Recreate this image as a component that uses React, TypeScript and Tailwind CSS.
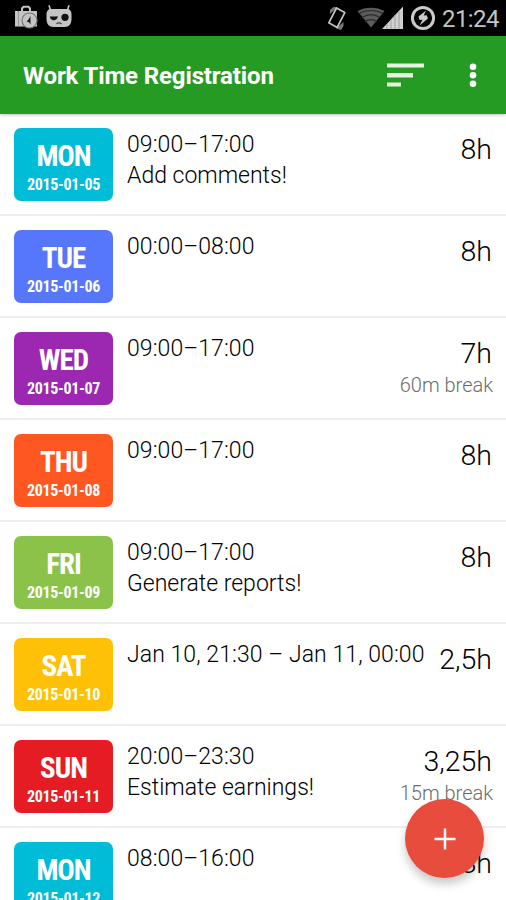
import clsx from "clsx";

type Entry = {
  day: string;
  date: string;
  color: string;
  time: string;
  note?: string;
  hours: string;
  pause?: string;
};

const entries: Entry[] = [
  { day: "MON", date: "2015-01-05", color: "bg-[#00bcd6]", time: "09:00–17:00", note: "Add comments!", hours: "8h" },
  { day: "TUE", date: "2015-01-06", color: "bg-[#5677fc]", time: "00:00–08:00", hours: "8h" },
  { day: "WED", date: "2015-01-07", color: "bg-[#9c27b0]", time: "09:00–17:00", hours: "7h", pause: "60m break" },
  { day: "THU", date: "2015-01-08", color: "bg-[#ff5722]", time: "09:00–17:00", hours: "8h" },
  { day: "FRI", date: "2015-01-09", color: "bg-[#8bc34a]", time: "09:00–17:00", note: "Generate reports!", hours: "8h" },
  { day: "SAT", date: "2015-01-10", color: "bg-[#ffc107]", time: "Jan 10, 21:30 – Jan 11, 00:00", hours: "2,5h" },
  { day: "SUN", date: "2015-01-11", color: "bg-[#e51c23]", time: "20:00–23:30", note: "Estimate earnings!", hours: "3,25h", pause: "15m break" },
  { day: "MON", date: "2015-01-12", color: "bg-[#00bcd6]", time: "08:00–16:00", hours: "8h" },
];

const StatusBar = () => (
  <div className="flex h-9 shrink-0 items-center justify-between bg-black pr-[7px] pl-[14px]">
    <div className="-mt-[2px] flex items-center gap-[8px]">
      {/* briefcase with clock */}
      <svg width="24" height="24" viewBox="0 0 24 24" fill="none">
        <path d="M1 6h22v15.500H1z" fill="#c4c4c4" />
        <path d="M8 6V3.500L9.500 1.800h5L16 3.500V6" stroke="#c4c4c4" strokeWidth="2" />
        <path d="M4.500 6v15.500" stroke="#999" strokeWidth="1" />
        <circle cx="15.500" cy="15.500" r="7.500" fill="#c4c4c4" stroke="#777" strokeWidth="1.200" />
        <path d="M16.500 11v8.500l-1.500-2.200-2.500-.8 2-2z" fill="#1a1a1a" />
      </svg>
      {/* cyanogen head */}
      <svg width="26" height="24" viewBox="0 0 26 24" fill="none">
        <path d="M3 .3l1.500 5M23 .3l-1.500 5" stroke="#c4c4c4" strokeWidth="1.600" />
        <path d="M5.500 4h15c3.500 0 5 2 5 5.500V14c0 5-2.500 8-7 8h-11c-4.500 0-7-3-7-8V9.500C.5 6 2 4 5.500 4z" fill="#c4c4c4" />
        <path d="M3.800 11.500c2.500.2 5 .2 8-.3-.3 2.800-2 4-4 4s-3.500-1.200-4-3.700z" fill="#111" />
        <circle cx="19" cy="12.300" r="3.600" fill="#111" />
        <path d="M10.500 18.700c1.500-1 3.500-1 5 .2" stroke="#444" strokeWidth="1.400" />
      </svg>
    </div>

    <div className="flex items-center">
      <svg width="22" height="26" viewBox="0 0 22 26" fill="none" className="mr-[9px]">
        <path d="M4 9V5l3.500-3h4zM17.500 17v4L15 25l-5-1.500z" fill="#777" />
        <path d="M10.500 3l8.300 4.600-7.600 14.800-8.400-4.600z" fill="#000" stroke="#c4c4c4" strokeWidth="1.700" strokeLinejoin="round" />
      </svg>
      <svg width="28" height="24" viewBox="0 0 28 24">
        <path d="M14 21.500L.5 5C8 .5 20 .5 27.500 5z" fill="#5c5c5c" />
        <path d="M2 7.500c7-4 17-4 24 0M5 11.500c5.500-3.500 12.500-3.500 18 0M8 15.500c3.500-2.500 8.500-2.500 12 0" fill="none" stroke="#2b2b2b" strokeWidth="1.200" />
      </svg>
      <svg width="22" height="24" viewBox="0 0 22 24" className="-ml-[3px]">
        <path d="M0 23L21 .5V23z" fill="#cfcfcf" />
        <path d="M5 18v5M9 14v9M13 9v14M17 5v18" stroke="#a6a6a6" strokeWidth="1.200" />
      </svg>
      <svg width="26" height="26" viewBox="0 0 26 26" fill="none" className="-mt-px ml-[6px]">
        <circle cx="13" cy="13" r="10.600" stroke="#cacaca" strokeWidth="3" />
        <path d="M16 5.500l-7.500 6 1 3.500 3-.3L9.500 20.500l8.500-7-1.300-3.200-3 .2z" fill="#cacaca" />
      </svg>
      <span className="ml-[6px] w-[57px] pt-[2px] text-[24px] leading-[34px] tracking-[-0.6px] text-[#c4c4c4]">21:24</span>
    </div>
  </div>
);

const Toolbar = () => (
  <header className="relative z-10 flex h-[78px] shrink-0 items-center justify-between bg-[#259b24] pr-[29px] pl-[23px] text-white shadow-[0_1px_3px_rgba(0,0,0,0.25)]">
    <h1 className="pt-[2px] text-[24px] leading-8 font-bold tracking-[-0.13px] whitespace-nowrap">
      Work Time Registration
    </h1>
    <div className="flex items-center gap-[45px]">
      <svg width="37" height="24" viewBox="0 0 37 24" fill="#e4f6e0">
        <path d="M0 .5h37v4H0zM0 10h26v4.500H0zM0 19.500h14v4H0z" />
      </svg>
      <svg width="8" height="24" viewBox="0 0 8 24" fill="#fff">
        <circle cx="4" cy="3.800" r="3.300" />
        <circle cx="4" cy="12.200" r="3.300" />
        <circle cx="4" cy="20.700" r="3.300" />
      </svg>
    </div>
  </header>
);

const Row = ({ entry }: { entry: Entry }) => (
  <li className="flex h-[102px] shrink-0 items-start border-b-2 border-[#efefef] pt-[14px] pr-[14px] pl-[14px]">
    <div
      className={clsx(
        "flex h-[73px] w-[99px] shrink-0 flex-col items-center rounded-[7px] pt-[11px] font-['Roboto_Condensed','Roboto'] font-bold text-white",
        entry.color,
      )}
    >
      <span className="text-[29px] leading-[34px] tracking-[-1px]">{entry.day}</span>
      <span className="pt-px text-[16px] leading-[22px] tracking-[-0.3px]">{entry.date}</span>
    </div>
    <div className="ml-[14px] flex flex-1 flex-col pt-px whitespace-nowrap text-[23px] leading-[31px] font-light text-black">
      <span className="tracking-[0.07px]">{entry.time}</span>
      {entry.note && <span>{entry.note}</span>}
    </div>
    <div className="flex flex-col items-end whitespace-nowrap">
      <span className="pt-[4px] text-[28.5px] leading-[36px] font-light text-black">{entry.hours}</span>
      {entry.pause && (
        <span className="-mr-px text-[20px] leading-[27px] font-light text-[#6c6c6c]">{entry.pause}</span>
      )}
    </div>
  </li>
);

const App = () => {
  return (
    <div className="relative flex h-[900px] w-[506px] flex-col overflow-hidden bg-white font-['Roboto',sans-serif]">
      <StatusBar />
      <Toolbar />
      <ul className="flex flex-col">
        {entries.map((entry) => (
          <Row key={entry.date} entry={entry} />
        ))}
      </ul>
      <button
        aria-label="Add"
        className="absolute top-[799px] left-[405px] flex size-[79px] items-center justify-center rounded-full bg-[#e74c3c] shadow-[0_6px_10px_rgba(0,0,0,0.22)]"
      >
        <svg width="22" height="22" viewBox="0 0 22 22" stroke="#fff" strokeWidth="2.500">
          <path d="M11 0.500v21M0.500 11h21" />
        </svg>
      </button>
    </div>
  );
};

export default App;
